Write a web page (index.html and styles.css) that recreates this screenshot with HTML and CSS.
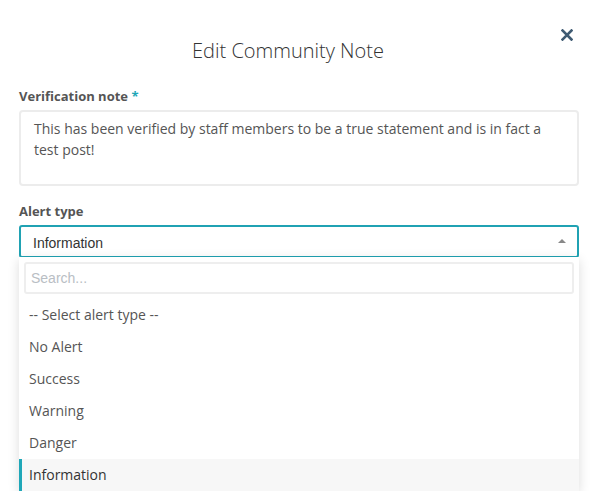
FILE: index.html
```html
<html>
  <head>
    <meta name="viewport" content="width=598px">
    <link rel="stylesheet" href="styles.css">
    <title>Edit Community Note</title>
  </head>
  <body>
    <div class="modal">
      <div class="modal-header">
        <h2 class="modal-title">Edit Community Note</h2>
        <button class="close" type="button" aria-label="Close">
          <svg width="12" height="12" viewBox="0 0 12 12">
            <path d="M1.5 1.5 L10.5 10.5 M10.5 1.5 L1.5 10.5" stroke="#3f5b73" stroke-width="2.6" stroke-linecap="square"/>
          </svg>
        </button>
      </div>

      <div class="field">
        <label class="field-label">Verification note <span class="req">*</span></label>
        <textarea class="note" rows="3">This has been verified by staff members to be a true statement and is in fact a test post!</textarea>
      </div>

      <div class="field">
        <label class="field-label">Alert type</label>
        <div class="picker">
          <div class="picker-current">
            <span>Information</span>
            <span class="caret"></span>
          </div>
          <div class="picker-menu">
            <div class="picker-search"><input type="text" placeholder="Search..."></div>
            <ul class="options">
              <li>-- Select alert type --</li>
              <li>No Alert</li>
              <li>Success</li>
              <li>Warning</li>
              <li>Danger</li>
              <li class="active">Information</li>
            </ul>
          </div>
        </div>
      </div>
    </div>
  </body>
</html>
```

FILE: styles.css
```css
body {
  margin: 0;
  background: #fff;
  font-family: 'Open Sans', sans-serif;
  color: #555;
  overflow: hidden;
}

.modal {
  padding: 0 19px 0 19px;
  width: 560px;
}

.modal-header {
  position: relative;
  padding-top: 37px;
  height: 50px;
}

.modal-title {
  margin: 0;
  padding-right: 22px;
  text-align: center;
  font-weight: 300;
  font-size: 20px;
  line-height: 28px;
  color: #333;
}

.close {
  position: absolute;
  top: 29px;
  right: 6px;
  border: 0;
  padding: 0;
  background: none;
  width: 12px;
  height: 12px;
}

.close svg {
  display: block;
}

.field {
  margin-bottom: 16px;
}

.field-label {
  display: block;
  font-size: 13px;
  font-weight: 700;
  line-height: 18px;
  color: #555;
  margin-bottom: 5px;
}

.req {
  color: #20a7b7;
}

.note {
  display: block;
  box-sizing: border-box;
  width: 560px;
  height: 76px;
  margin: 0;
  padding: 6px 13px;
  border: 2px solid #ececec;
  border-radius: 4px;
  font-family: 'Open Sans', sans-serif;
  font-size: 14px;
  line-height: 21px;
  color: #555;
  resize: none;
  outline: none;
}

.picker {
  position: relative;
}

.picker-current {
  box-sizing: border-box;
  height: 33px;
  border: 2px solid #20a2b3;
  border-radius: 3px;
  display: flex;
  align-items: center;
  justify-content: space-between;
  padding: 2px 11px 0 12px;
  font-family: 'Liberation Sans', Arial, sans-serif;
  font-size: 14px;
  color: #333;
}

.caret {
  width: 0;
  height: 0;
  border-left: 4px solid transparent;
  border-right: 4px solid transparent;
  border-bottom: 4px solid #888;
  margin-top: -3px;
}

.picker-menu {
  position: absolute;
  top: 32px;
  left: 0;
  right: 0;
  background: #fff;
  box-shadow: 0 3px 12px rgba(0, 0, 0, 0.14);
  border-radius: 0 0 3px 3px;
}

.picker-search {
  padding: 5px 5px 5px 5px;
}

.picker-search input {
  box-sizing: border-box;
  width: 100%;
  height: 32px;
  border: 2px solid #eee;
  border-radius: 3px;
  padding: 0 5px;
  font-family: 'Liberation Sans', Arial, sans-serif;
  font-size: 14px;
  color: #333;
  outline: none;
}

.picker-search input::placeholder {
  color: #b9bec4;
}

.options {
  list-style: none;
  margin: 0;
  padding: 0;
}

.options li {
  height: 32px;
  line-height: 32px;
  padding-left: 10px;
  font-size: 14px;
  color: #555;
}

.options li.active {
  background: #f7f7f7;
  border-left: 3px solid #1fa7b8;
  padding-left: 7px;
  color: #333;
}
```
